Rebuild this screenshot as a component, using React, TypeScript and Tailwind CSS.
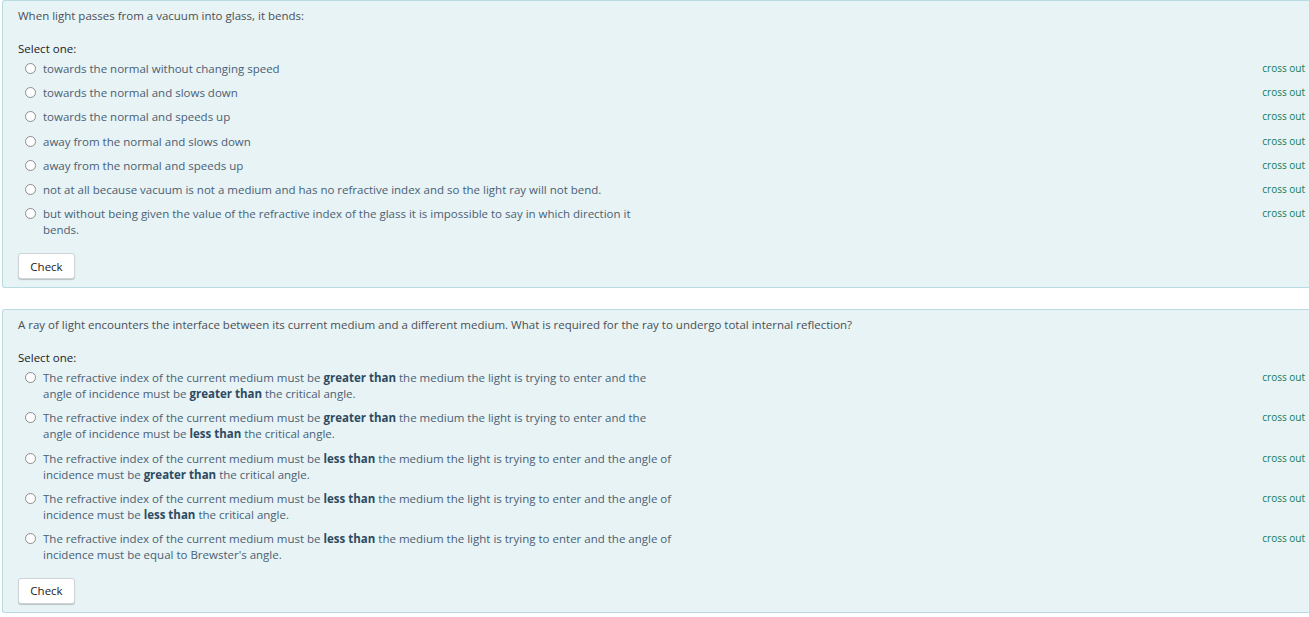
import React from 'react';

type Option = { lines: React.ReactNode[] };

const B = ({ children }: { children: React.ReactNode }) => (
  <b className="font-bold text-[#2d4a62]">{children}</b>
);

const q1: Option[] = [
  { lines: ['towards the normal without changing speed'] },
  { lines: ['towards the normal and slows down'] },
  { lines: ['towards the normal and speeds up'] },
  { lines: ['away from the normal and slows down'] },
  { lines: ['away from the normal and speeds up'] },
  { lines: ['not at all because vacuum is not a medium and has no refractive index and so the light ray will not bend.'] },
  {
    lines: [
      'but without being given the value of the refractive index of the glass it is impossible to say in which direction it',
      'bends.',
    ],
  },
];

const q2: Option[] = [
  {
    lines: [
      <>The refractive index of the current medium must be <B>greater than</B> the medium the light is trying to enter and the</>,
      <>angle of incidence must be <B>greater than</B> the critical angle.</>,
    ],
  },
  {
    lines: [
      <>The refractive index of the current medium must be <B>greater than</B> the medium the light is trying to enter and the</>,
      <>angle of incidence must be <B>less than</B> the critical angle.</>,
    ],
  },
  {
    lines: [
      <>The refractive index of the current medium must be <B>less than</B> the medium the light is trying to enter and the angle of</>,
      <>incidence must be <B>greater than</B> the critical angle.</>,
    ],
  },
  {
    lines: [
      <>The refractive index of the current medium must be <B>less than</B> the medium the light is trying to enter and the angle of</>,
      <>incidence must be <B>less than</B> the critical angle.</>,
    ],
  },
  {
    lines: [
      <>The refractive index of the current medium must be <B>less than</B> the medium the light is trying to enter and the angle of</>,
      <>incidence must be equal to Brewster's angle.</>,
    ],
  },
];

function Question({ text, options }: { text: string; options: Option[] }) {
  return (
    <div className="ml-[2px] rounded-l-[3px] border border-r-0 border-[#b8dce2] bg-[#e7f3f5] pl-[15px] pr-[4px] pt-[7px] pb-[8px]">
      <p className="text-[#4b4f56] leading-[16px]">{text}</p>
      <p className="mt-[17px] text-[#1d2125] leading-[16px]">Select one:</p>
      <div className="mt-[4px] flex flex-col gap-[8.2px]">
        {options.map((o, i) => (
          <div key={i} className="flex items-start">
            <span className="ml-[7px] mt-[2px] h-[11px] w-[11px] shrink-0 rounded-full border border-[#8d8d8d] bg-white" />
            <div className="ml-[7px] flex-1 text-[#4a6074] leading-[16px]">
              {o.lines.map((l, j) => (
                <div key={j} className="whitespace-nowrap">{l}</div>
              ))}
            </div>
            <span className="-mt-[1px] text-[10px] leading-[16px] text-[#167a55]">cross out</span>
          </div>
        ))}
      </div>
      <button className="mt-[15px] h-[26px] w-[57px] rounded-[3px] border border-[#cdd3d6] bg-white text-[#1d2125] shadow-[0_1px_1px_rgba(0,0,0,0.2)]">
        Check
      </button>
    </div>
  );
}

export default function App() {
  return (
    <div className="min-h-screen bg-white text-[11.5px]" style={{ fontFamily: '"Open Sans", "Noto Sans", sans-serif' }}>
      <Question text="When light passes from a vacuum into glass, it bends:" options={q1} />
      <div className="h-[21px]" />
      <Question
        text="A ray of light encounters the interface between its current medium and a different medium. What is required for the ray to undergo total internal reflection?"
        options={q2}
      />
    </div>
  );
}
